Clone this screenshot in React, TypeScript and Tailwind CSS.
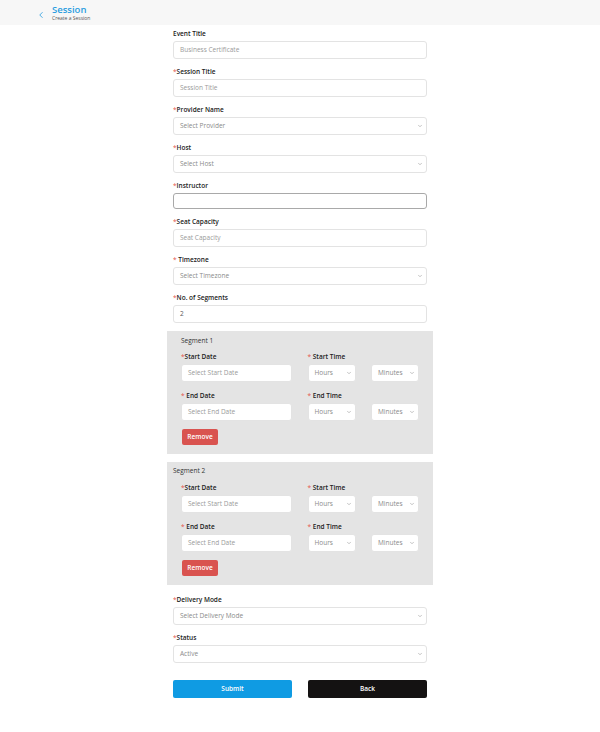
import React from "react";
import { ChevronLeft, ChevronDown } from "lucide-react";

const font = { fontFamily: '"Open Sans", "Noto Sans", sans-serif' };

function Label({ text, req = true, space = false }: { text: string; req?: boolean; space?: boolean }) {
  return (
    <div className="h-[9px] text-[6.5px] leading-[9px] font-semibold text-[#222]">
      {req && <span className="text-[#e5534b] font-normal">*</span>}
      {req && space && <span> </span>}
      {text}
    </div>
  );
}

function Input({ ph, value, h = "h-[18px]", dark = false }: { ph?: string; value?: string; h?: string; dark?: boolean }) {
  return (
    <div
      className={`${h} w-full rounded-[3px] bg-white border ${dark ? "border-[#a9a9a9]" : "border-[#e3e3e3]"} px-[6px] flex items-center text-[6.5px] ${value ? "text-[#555]" : "text-[#9a9a9a]"}`}
    >
      {value ?? ph}
    </div>
  );
}

function Select({ ph, w = "w-full" }: { ph: string; w?: string }) {
  return (
    <div
      className={`h-[18px] ${w} rounded-[3px] bg-white border border-[#e3e3e3] pl-[6px] pr-[3px] flex items-center justify-between text-[6.5px] text-[#8a8a8a]`}
    >
      <span>{ph}</span>
      <ChevronDown size={6} strokeWidth={2} className="text-[#888]" />
    </div>
  );
}

function Field({ label, req = true, space = false, children }: { label: string; req?: boolean; space?: boolean; children: React.ReactNode }) {
  return (
    <div className="flex flex-col gap-[3px]">
      <Label text={label} req={req} space={space} />
      {children}
    </div>
  );
}

function Segment({ n, first }: { n: number; first: boolean }) {
  return (
    <div className={`-mx-[6px] bg-[#e4e4e4] ${first ? "pt-[5px]" : "pt-[4px]"} pb-[9px] px-[14px]`}>
      <div className={`h-[9px] text-[6.5px] leading-[9px] text-[#333] ${first ? "" : "-ml-[8px]"}`}>Segment {n}</div>
      <div className={`${first ? "mt-[7px]" : "mt-[8px]"} grid grid-cols-[111px_48px_48px] justify-between gap-y-[9px]`}>
        <Field label="Start Date">
          <Input ph="Select Start Date" />
        </Field>
        <Field label="Start Time" space>
          <Select ph="Hours" w="w-[48px]" />
        </Field>
        <div className="flex flex-col gap-[3px]">
          <div className="h-[9px]" />
          <Select ph="Minutes" w="w-[48px]" />
        </div>
        <Field label="End Date" space>
          <Input ph="Select End Date" />
        </Field>
        <Field label="End Time" space>
          <Select ph="Hours" w="w-[48px]" />
        </Field>
        <div className="flex flex-col gap-[3px]">
          <div className="h-[9px]" />
          <Select ph="Minutes" w="w-[48px]" />
        </div>
      </div>
      <button className="mt-[8px] ml-[1px] h-[16px] w-[36px] rounded-[2px] bg-[#d9534f] text-white text-[6.5px] font-semibold flex items-center justify-center">
        Remove
      </button>
    </div>
  );
}

export default function App() {
  return (
    <div className="min-h-[732px] bg-white" style={font}>
      <div className="h-[25px] bg-[#f7f7f7] flex items-center pl-[36px]">
        <ChevronLeft size={10} strokeWidth={2} className="text-[#2a9de0] mt-[5px]" />
        <div className="ml-[6px] flex flex-col">
          <div className="text-[9.5px] leading-[11px] font-semibold text-[#2a9de0]">Session</div>
          <div className="text-[5px] leading-[7px] text-[#555]">Create a Session</div>
        </div>
      </div>

      <div className="w-[254px] mx-auto pt-[4px] pb-[35px] flex flex-col gap-[8px]">
        <Field label="Event Title" req={false}>
          <Input ph="Business Certificate" />
        </Field>
        <Field label="Session Title">
          <Input ph="Session Title" />
        </Field>
        <Field label="Provider Name">
          <Select ph="Select Provider" />
        </Field>
        <Field label="Host">
          <Select ph="Select Host" />
        </Field>
        <Field label="Instructor">
          <Input h="h-[16px]" dark />
        </Field>
        <Field label="Seat Capacity">
          <Input ph="Seat Capacity" />
        </Field>
        <Field label="Timezone" space>
          <Select ph="Select Timezone" />
        </Field>
        <Field label="No. of Segments">
          <Input value="2" />
        </Field>

        <Segment n={1} first />
        <Segment n={2} first={false} />

        <div className="mt-[2px]">
          <Field label="Delivery Mode">
            <Select ph="Select Delivery Mode" />
          </Field>
        </div>
        <Field label="Status">
          <Select ph="Active" />
        </Field>

        <div className="mt-[9px] flex justify-between">
          <button className="h-[18px] w-[119px] rounded-[2px] bg-[#0f9be3] text-white text-[6.5px] font-semibold">
            Submit
          </button>
          <button className="h-[18px] w-[119px] rounded-[2px] bg-[#141212] text-white text-[6.5px] font-semibold">
            Back
          </button>
        </div>
      </div>
    </div>
  );
}
